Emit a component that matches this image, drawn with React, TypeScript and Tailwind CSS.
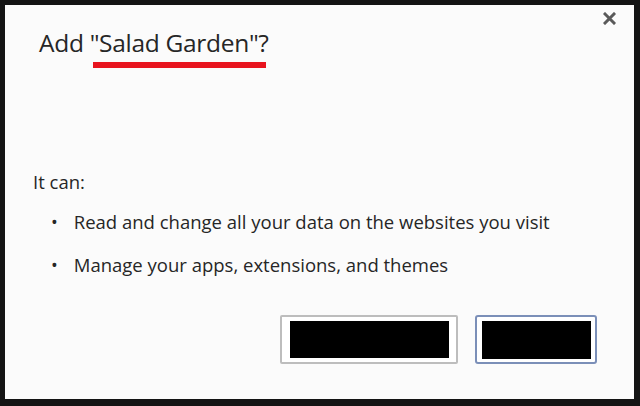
import React from 'react';

const font = { fontFamily: '"Open Sans", "Noto Sans", sans-serif' };

const App: React.FC = () => {
  return (
    <div className="w-[640px] h-[406px] bg-[#141414] pl-[5px] pt-[5px] pr-[6px] pb-[7px]" style={font}>
      <div className="relative w-full h-full bg-[#fbfbfb] flex flex-col">
        <button className="absolute right-[18px] top-[7px]">
          <svg width="13" height="13" viewBox="0 0 13 13">
            <path d="M2 2 L11 11 M11 2 L2 11" stroke="#5a5a5a" strokeWidth="3" strokeLinecap="square" />
          </svg>
        </button>

        <h1 className="ml-[34px] mt-[22px] text-[24.5px] leading-[32px] text-[#262626] tracking-[-0.3px]">
          Add "Salad Garden"?
        </h1>
        <div className="ml-[88px] mt-[3px] w-[173px] h-[6px] bg-[#e8141e]" />

        <p className="ml-[28px] mt-[102px] text-[18.5px] leading-[24px] text-[#262626]">It can:</p>
        <ul className="mt-[16px] ml-[46px] flex flex-col gap-[19px] text-[18.5px] leading-[24px] text-[#262626]">
          <li className="flex items-center gap-[16px]">
            <span className="text-[18px] leading-[24px]">•</span>
            <span>Read and change all your data on the websites you visit</span>
          </li>
          <li className="flex items-center gap-[16px]">
            <span className="text-[18px] leading-[24px]">•</span>
            <span>Manage your apps, extensions, and themes</span>
          </li>
        </ul>

        <div className="mt-auto mb-[35px] mr-[37px] flex justify-end gap-[17px]">
          <div className="w-[178px] h-[49px] border-2 border-[#bdbdbd] rounded-[2px] bg-white flex items-center justify-center">
            <div className="w-[159px] h-[37px] bg-black" />
          </div>
          <div className="w-[122px] h-[49px] border-2 border-[#7b8fb8] rounded-[3px] bg-white flex items-center justify-center">
            <div className="w-[109px] h-[38px] bg-black" />
          </div>
        </div>
      </div>
    </div>
  );
};

export default App;
